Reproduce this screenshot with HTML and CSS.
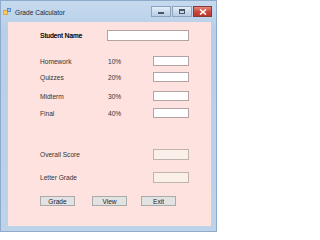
FILE: index.html
```html
<!DOCTYPE html>
<html>
<head>
<meta charset="utf-8">
<link rel="stylesheet" href="styles.css">
</head>
<body>
<div class="window">
  <div class="titlebar">
    <svg class="appicon" width="8" height="8" viewBox="0 0 8 8">
      <rect x="0" y="2" width="5" height="5" fill="#e8a13a"/>
      <rect x="1" y="3" width="3" height="3" fill="#f6d35c"/>
      <rect x="4" y="0" width="4" height="4" fill="#5a8fd0"/>
      <rect x="5" y="1" width="2" height="2" fill="#9cc3ee"/>
    </svg>
    <span class="title">Grade Calculator</span>
    <div class="controls">
      <div class="ctl ctl-min"><span class="glyph-min"></span></div>
      <div class="ctl ctl-max"><span class="glyph-max"></span></div>
      <div class="ctl ctl-close">
        <svg width="8" height="6" viewBox="0 0 8 6"><path d="M1 0.5 L7 5.5 M7 0.5 L1 5.5" stroke="#fff" stroke-width="1.6"/></svg>
      </div>
    </div>
  </div>
  <div class="client">
    <div class="row row-name">
      <span class="label label-strong">Student Name</span>
      <span class="box box-wide"></span>
    </div>
    <div class="row row-hw">
      <span class="label">Homework</span>
      <span class="pct">10%</span>
      <span class="box"></span>
    </div>
    <div class="row row-qz">
      <span class="label">Quizzes</span>
      <span class="pct">20%</span>
      <span class="box"></span>
    </div>
    <div class="row row-mid">
      <span class="label">Midterm</span>
      <span class="pct">30%</span>
      <span class="box"></span>
    </div>
    <div class="row row-fin">
      <span class="label">Final</span>
      <span class="pct">40%</span>
      <span class="box"></span>
    </div>
    <div class="row row-overall">
      <span class="label">Overall Score</span>
      <span class="pct"></span>
      <span class="box box-ro"></span>
    </div>
    <div class="row row-letter">
      <span class="label">Letter Grade</span>
      <span class="pct"></span>
      <span class="box box-ro"></span>
    </div>
    <div class="buttons">
      <span class="btn">Grade</span>
      <span class="btn btn-view">View</span>
      <span class="btn btn-exit">Exit</span>
    </div>
  </div>
</div>
</body>
</html>
```
FILE: styles.css
```css
html, body {
  margin: 0;
  padding: 0;
  width: 217px;
  height: 232px;
  overflow: hidden;
  background: #ffffff;
}
.window {
  box-sizing: border-box;
  width: 217px;
  height: 232px;
  background: linear-gradient(#c6daee, #b7cfe8 30px, #bcd3ea);
  border: 1px solid #8fabcb;
  display: flex;
  flex-direction: column;
  font-family: "Liberation Sans", Arial, sans-serif;
}
.titlebar {
  height: 21px;
  display: flex;
  align-items: center;
  padding-left: 2px;
  position: relative;
}
.appicon {
  margin-top: 1px;
  margin-right: 4px;
}
.title {
  font-size: 6.6px;
  color: #1c2836;
  margin-top: 1px;
}
.controls {
  margin-left: auto;
  margin-right: 4px;
  display: flex;
  gap: 1px;
  align-self: flex-start;
  margin-top: 5px;
}
.ctl {
  box-sizing: border-box;
  height: 11px;
  display: flex;
  align-items: center;
  justify-content: center;
  border: 1px solid #8ea2bd;
}
.ctl-min, .ctl-max {
  width: 20px;
  background: linear-gradient(#e5eef8, #ccdbec 50%, #b9cde3);
}
.ctl-close {
  width: 19px;
  background: linear-gradient(#e48a7e, #c8483c 50%, #b9372c);
  border-color: #8a3a34;
}
.glyph-min {
  width: 6px;
  height: 2px;
  background: #4a5566;
  margin-top: 3px;
}
.glyph-max {
  box-sizing: border-box;
  width: 6px;
  height: 5px;
  border: 1px solid #4a5566;
  border-top-width: 2px;
}
.client {
  box-sizing: border-box;
  width: 203px;
  height: 204px;
  margin-left: 7px;
  background: #fde2e0;
  display: flex;
  flex-direction: column;
  padding-left: 32px;
}
.row {
  display: grid;
  grid-template-columns: 68px 45px 36px;
  align-items: center;
  height: 11px;
}
.row-name {
  grid-template-columns: 67px 82px;
  margin-top: 8px;
}
.row-hw { margin-top: 15px; height: 10px; }
.row-qz { margin-top: 6px; height: 10px; }
.row-mid { margin-top: 9px; height: 10px; }
.row-fin { margin-top: 7px; height: 10px; }
.row-overall { margin-top: 31px; }
.row-letter { margin-top: 12px; }
.label, .pct {
  font-size: 6.6px;
  color: #333333;
  white-space: nowrap;
}
.label-strong {
  color: #111;
  text-shadow: 0.3px 0 0 #111;
}
.box {
  box-sizing: border-box;
  height: 100%;
  background: #ffffff;
  border: 1px solid #b3a3a3;
}
.box-ro {
  background: #fbefe9;
  border-color: #c0b2ac;
}
.buttons {
  display: flex;
  margin-top: 13px;
  height: 10px;
}
.btn {
  box-sizing: border-box;
  width: 35px;
  height: 10px;
  background: #e2e2e2;
  border: 1px solid #aaaaaa;
  font-size: 6.6px;
  color: #222;
  display: flex;
  align-items: center;
  justify-content: center;
}
.btn-view { margin-left: 17px; }
.btn-exit { margin-left: 14px; }
```
